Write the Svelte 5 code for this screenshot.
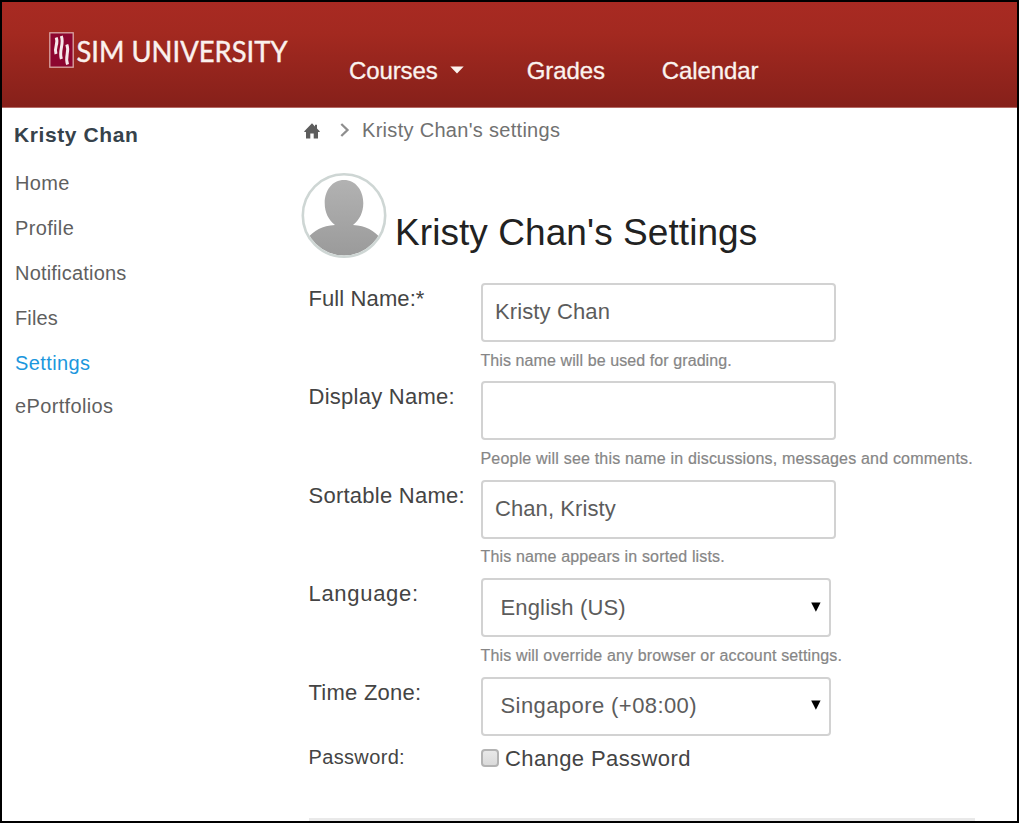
<script>
  const nav = [
    { label: 'Courses', menu: true },
    { label: 'Grades' },
    { label: 'Calendar' }
  ];

  const links = [
    { label: 'Home', track: 0.35 },
    { label: 'Profile', track: 0.35 },
    { label: 'Notifications', track: 0.2 },
    { label: 'Files', track: 0.15 },
    { label: 'Settings', track: 0.4, active: true },
    { label: 'ePortfolios', track: 0.35 }
  ];

  const fields = [
    { label: 'Full Name:*', track: 0.1, value: 'Kristy Chan', valueTrack: 0.12, hint: 'This name will be used for grading.', hintTrack: 0.09 },
    { label: 'Display Name:', track: 0.26, value: '', valueTrack: 0, hint: 'People will see this name in discussions, messages and comments.', hintTrack: 0.19 },
    { label: 'Sortable Name:', track: 0.25, value: 'Chan, Kristy', valueTrack: 0.08, hint: 'This name appears in sorted lists.', hintTrack: 0.15 },
    { label: 'Language:', track: 0.7, select: true, value: 'English (US)', valueTrack: 0.15, hint: 'This will override any browser or account settings.', hintTrack: 0.15 },
    { label: 'Time Zone:', track: 0.25, select: true, value: 'Singapore (+08:00)', valueTrack: 0.42 }
  ];
</script>

<div class="page">
  <header>
    <svg class="logo" width="242" height="40" viewBox="0 0 242 40" role="img" aria-label="SIM University">
      <rect x="0.8" y="1.8" width="23.4" height="34.4" fill="#8d0630" stroke="#dba7a5" stroke-width="1.3" />
      <g fill="none" stroke="#f6e8ea" stroke-width="3">
        <path d="M7.200 6.500C10 13 4.500 16 7 23" />
        <path d="M12.300 5C15.500 13 9.500 19 12.400 28" />
        <path d="M17.800 13.500C20.800 20.500 15.500 25.500 18.600 33.500" />
      </g>
      <text x="27.500" y="31" textLength="211" lengthAdjust="spacingAndGlyphs">SIM UNIVERSITY</text>
    </svg>
    <nav>
      {#each nav as item}
        <a href="#top">
          {item.label}
          {#if item.menu}
            <svg class="caret" width="14" height="8" viewBox="0 0 14 8"><path d="M0.300 0.500H13.700L7 7.500Z" fill="#fbf3ef" /></svg>
          {/if}
        </a>
      {/each}
    </nav>
  </header>

  <div class="body">
    <aside>
      <h2>Kristy Chan</h2>
      <ul>
        {#each links as link}
          <li class:active={link.active} style="letter-spacing: {link.track}px">{link.label}</li>
        {/each}
      </ul>
    </aside>

    <main>
      <div class="crumbs">
        <svg class="home" width="16" height="16" viewBox="0 0 16 16">
          <path d="M8 0.300L11 3.400V1.800H13V5.400L15.700 8.200V9H14V15.600H9.700V10.500H6.300V15.600H2V9H0.300V8.200Z" fill="#5d5d5d" />
        </svg>
        <svg class="chevron" width="10" height="14" viewBox="0 0 10 14"><path d="M1.300 1L7.500 7L1.300 13" fill="none" stroke="#8e8e8e" stroke-width="2.300" /></svg>
        <span>Kristy Chan's settings</span>
      </div>

      <div class="title">
        <svg width="86" height="86" viewBox="0 0 86 86">
          <defs>
            <linearGradient id="shade" x1="0" y1="7" x2="0" y2="84" gradientUnits="userSpaceOnUse">
              <stop offset="0" stop-color="#b2b2b2" />
              <stop offset="1" stop-color="#9a9a9a" />
            </linearGradient>
            <clipPath id="disc"><circle cx="43" cy="42.500" r="40" /></clipPath>
          </defs>
          <g clip-path="url(#disc)" fill="url(#shade)">
            <path d="M43 7C54.500 7 62.300 17 62.300 30C62.300 39.500 58.500 47 52 52C65 53 73 57 80 66V86H6V66C13 57 21 53 34 52C27.500 47 23.700 39.500 23.700 30C23.700 17 31.500 7 43 7Z" />
          </g>
          <circle cx="43" cy="42.500" r="41.200" fill="none" stroke="#ced6d4" stroke-width="2.600" />
        </svg>
        <h1>Kristy Chan's Settings</h1>
      </div>

      <form>
        {#each fields as f}
          <div class="row">
            <span class="label" style="letter-spacing: {f.track}px">{f.label}</span>
            <div class="control">
              {#if f.select}
                <div class="box select">
                  <span style="letter-spacing: {f.valueTrack}px">{f.value}</span>
                  <svg width="10" height="10" viewBox="0 0 10 10"><path d="M0.200 0.500H9.600L4.900 9.700Z" fill="#000" /></svg>
                </div>
              {:else}
                <div class="box"><span style="letter-spacing: {f.valueTrack}px">{f.value}</span></div>
              {/if}
              {#if f.hint}
                <div class="hint" style="letter-spacing: {f.hintTrack}px">{f.hint}</div>
              {/if}
            </div>
          </div>
        {/each}
        <div class="row password">
          <span class="label">Password:</span>
          <div class="check"><i></i><span>Change Password</span></div>
        </div>
      </form>
      <div class="rule"></div>
    </main>
  </div>
</div>

<style>
  :global(body) { margin: 0; background: #fff; }
  .page {
    box-sizing: border-box;
    width: 1019px;
    height: 823px;
    overflow: hidden;
    border: 2px solid #000;
    background: #fff;
    font-family: "Liberation Sans", Arial, sans-serif;
  }
  header {
    box-sizing: border-box;
    height: 106px;
    display: flex;
    align-items: flex-start;
    padding-left: 47px;
    background: linear-gradient(#a82a22, #a32920 30%, #86201a);
    border-bottom: 1px solid #b56a65;
  }
  .logo { flex: none; margin-top: 29px; }
  .logo text { font: 28px Lato, "Open Sans", sans-serif; fill: #fbf1ee; stroke: #fbf1ee; stroke-width: 0.4px; }
  nav { display: flex; padding: 54px 0 0 58px; gap: 57px; }
  nav a {
    display: flex;
    align-items: center;
    font-size: 24px;
    line-height: 30px;
    letter-spacing: -0.1px;
    color: #fbf3ef;
    text-decoration: none;
    -webkit-text-stroke: 0.3px #fbf3ef;
  }
  nav a:first-child { margin-right: 6px; }
  .caret { margin-left: 12px; margin-top: -3px; }
  .body { display: flex; }
  aside { width: 300px; flex: none; padding-left: 12px; box-sizing: border-box; }
  h2 {
    margin: 12px 0 18px;
    font-size: 21px;
    line-height: 30px;
    letter-spacing: 0.6px;
    color: #36424b;
  }
  ul { list-style: none; margin: 0; padding: 0 0 0 1px; }
  li { font-size: 20px; line-height: 30px; margin-bottom: 15px; color: #5f5f5f; }
  li.active { color: #1c97dd; margin-bottom: 13px; }
  main { width: 673px; }
  .crumbs {
    display: flex;
    align-items: center;
    height: 30px;
    margin-top: 7px;
    padding-left: 2px;
    font-size: 20px;
    line-height: 28px;
    letter-spacing: 0.3px;
    color: #717171;
  }
  .crumbs span { margin-top: -1px; }
  .home { margin-top: 1px; }
  .chevron { margin: 0 12px 0 20px; }
  .title { display: flex; height: 86px; margin-top: 28px; margin-left: -1px; }
  h1 {
    margin: 37px 0 0 8px;
    font-size: 37px;
    font-weight: 400;
    line-height: 46px;
    letter-spacing: 0.07px;
    color: #222;
  }
  form { padding: 24px 0 0 6px; }
  .row { display: grid; grid-template-columns: 172.5px auto; height: 98.4px; }
  .label { padding-left: 0.5px; font-size: 22px; line-height: 31px; white-space: nowrap; color: #444; }
  .control { min-width: 0; }
  .box {
    box-sizing: border-box;
    width: 355.5px;
    height: 59px;
    display: flex;
    align-items: center;
    padding: 0 12px 1px 12.500px;
    border: 2px solid #d2d2d2;
    border-radius: 4px;
    font-size: 22px;
    color: #5c5c5c;
  }
  .select { width: 350px; padding: 0 8px 0 18px; justify-content: space-between; }
  .select svg { margin-bottom: 2px; }
  .hint { margin-top: 6.500px; font-size: 16px; line-height: 24px; white-space: nowrap; color: #868686; -webkit-text-stroke: 0.2px #868686; }
  .row:nth-child(5) { height: 60px; }
  .password { height: 30px; margin-top: 5.500px; }
  .password .label { font-size: 20px; line-height: 30px; letter-spacing: 0.35px; }
  .check { display: flex; align-items: center; font-size: 22px; line-height: 30px; letter-spacing: 0.4px; color: #444; }
  .check span { padding-top: 2px; }
  .check i {
    box-sizing: border-box;
    width: 18px;
    height: 18px;
    margin-right: 6.500px;
    border: 2px solid #b3b3b3;
    border-radius: 4px;
    background: linear-gradient(#e8e8e8, #dadada);
  }
  .rule { height: 3px; margin: 45.500px 0 0 7px; background: #e9e9e9; }
</style>
